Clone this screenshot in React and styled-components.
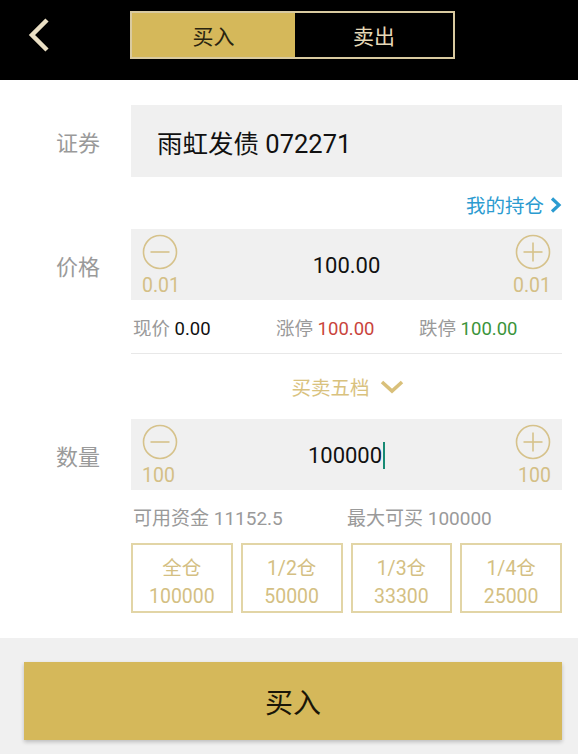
import React from 'react';
import styled, { createGlobalStyle } from 'styled-components';

const GOLD = '#d5b85a';
const TAN = '#d6c28b';

const GlobalStyle = createGlobalStyle`
  html, body {
    margin: 0;
    padding: 0;
    background: #fff;
  }
  body {
    font-family: Roboto, "Noto Sans CJK SC", sans-serif;
  }
  * {
    box-sizing: border-box;
  }
`;

const BackIcon = () => (
  <svg width="24" height="36" viewBox="0 0 24 36">
    <polyline points="20,3 5,18 20,33" fill="none" stroke="#eadfc4" strokeWidth="4.5" strokeLinejoin="miter" />
  </svg>
);

const StepIcon = ({ plus }) => (
  <svg width="36" height="36" viewBox="0 0 36 36">
    <circle cx="18" cy="18" r="16.5" fill="none" stroke={TAN} strokeWidth="1.6" />
    <line x1="8.5" y1="18" x2="27.5" y2="18" stroke={TAN} strokeWidth="1.6" />
    {plus && <line x1="18" y1="8.5" x2="18" y2="27.5" stroke={TAN} strokeWidth="1.6" />}
  </svg>
);

const RightChevron = () => (
  <svg width="13" height="16" viewBox="0 0 13 16">
    <polyline points="3,1.5 10,8 3,14.5" fill="none" stroke="#2b9bd0" strokeWidth="3.2" />
  </svg>
);

const DownChevron = () => (
  <svg width="24" height="14" viewBox="0 0 24 14">
    <polyline points="2,2 12,11 22,2" fill="none" stroke="#d9c07a" strokeWidth="3.6" />
  </svg>
);

const Stepper = ({ value, step, cursor }) => (
  <StepBox>
    <StepSide>
      <StepIcon />
      <StepLabel>{step}</StepLabel>
    </StepSide>
    <StepValue>
      {value}
      {cursor && <Cursor />}
    </StepValue>
    <StepSide right>
      <StepIcon plus />
      <StepLabel>{step}</StepLabel>
    </StepSide>
  </StepBox>
);

const positions = [
  { title: '全仓', qty: '100000' },
  { title: '1/2仓', qty: '50000' },
  { title: '1/3仓', qty: '33300' },
  { title: '1/4仓', qty: '25000' },
];

const App = () => (
  <Page>
    <GlobalStyle />
    <Header>
      <BackIcon />
      <Tabs>
        <Tab active>买入</Tab>
        <Tab>卖出</Tab>
      </Tabs>
    </Header>

    <Form>
      <Label>证券</Label>
      <SecurityBox>雨虹发债 072271</SecurityBox>

      <span />
      <LinkRow>
        我的持仓
        <RightChevron />
      </LinkRow>

      <Label>价格</Label>
      <Stepper value="100.00" step="0.01" />

      <span />
      <InfoRow>
        <span>现价 <Num>0.00</Num></span>
        <span>涨停 <Num color="#c9443c">100.00</Num></span>
        <span>跌停 <Num color="#3b943b">100.00</Num></span>
      </InfoRow>

      <span />
      <LevelsRow>
        买卖五档
        <DownChevron />
      </LevelsRow>

      <Label>数量</Label>
      <Stepper value="100000" step="100" cursor />

      <span />
      <FundsRow>
        <span>可用资金 11152.5</span>
        <span>最大可买 100000</span>
      </FundsRow>

      <span />
      <PositionGrid>
        {positions.map((p) => (
          <PositionButton key={p.title}>
            <span>{p.title}</span>
            <span>{p.qty}</span>
          </PositionButton>
        ))}
      </PositionGrid>
    </Form>

    <Footer>
      <BuyButton>买入</BuyButton>
    </Footer>
  </Page>
);

const Page = styled.div`
  width: 578px;
  height: 754px;
  display: flex;
  flex-direction: column;
  overflow: hidden;
  background: #fff;
`;

const Header = styled.div`
  height: 80px;
  flex-shrink: 0;
  background: #000;
  display: flex;
  align-items: center;
  padding: 0 0 10px 27px;
`;

const Tabs = styled.div`
  display: flex;
  width: 325px;
  height: 48px;
  margin-left: 79px;
  border: 2px solid #d9caa0;
`;

const Tab = styled.div`
  flex: ${(p) => (p.active ? '0 0 163px' : '1')};
  display: flex;
  align-items: center;
  justify-content: center;
  font-size: 21px;
  background: ${(p) => (p.active ? GOLD : '#000')};
  color: ${(p) => (p.active ? '#2a2410' : '#e6d9b8')};
`;

const Form = styled.div`
  display: grid;
  grid-template-columns: 75px 1fr;
  align-items: center;
  padding: 25px 16px 25px 56px;
`;

const Label = styled.div`
  font-size: 22px;
  color: #9a9a9a;
`;

const SecurityBox = styled.div`
  height: 72px;
  background: #f0f0f0;
  display: flex;
  align-items: center;
  padding-left: 26px;
  font-size: 25.5px;
  color: #111;
`;

const LinkRow = styled.div`
  height: 52px;
  display: flex;
  align-items: center;
  justify-content: flex-end;
  gap: 5px;
  font-size: 19.5px;
  color: #2b9bd0;
  padding-top: 3px;
`;

const StepBox = styled.div`
  height: 71px;
  background: #f0f0f0;
  display: flex;
  align-items: stretch;
  padding: 5px 11px 0 11px;
`;

const StepSide = styled.div`
  width: 40px;
  display: flex;
  flex-direction: column;
  align-items: ${(p) => (p.right ? 'flex-end' : 'flex-start')};
`;

const StepLabel = styled.div`
  font-size: 19.5px;
  line-height: 22px;
  margin-top: 5px;
  color: #d4bf86;
`;

const StepValue = styled.div`
  flex: 1;
  display: flex;
  align-items: center;
  justify-content: center;
  font-size: 22px;
  color: #111;
  padding-bottom: 3px;
`;

const Cursor = styled.span`
  display: inline-block;
  width: 2px;
  height: 27px;
  margin-left: 1px;
  background: #178a74;
`;

const InfoRow = styled.div`
  height: 54px;
  display: grid;
  grid-template-columns: 143px 143px 1fr;
  align-items: center;
  padding-left: 2px;
  font-size: 18.5px;
  color: #9a9a9a;
  border-bottom: 1px solid #e8e8e8;
`;

const Num = styled.span`
  color: ${(p) => p.color || '#111'};
`;

const LevelsRow = styled.div`
  height: 65px;
  display: flex;
  align-items: center;
  justify-content: center;
  gap: 10px;
  font-size: 19.5px;
  color: #d9c27e;
  padding-left: 2px;
`;

const FundsRow = styled.div`
  height: 53px;
  display: grid;
  grid-template-columns: 214px 1fr;
  align-items: center;
  padding-left: 2px;
  font-size: 19px;
  color: #9a9a9a;
`;

const PositionGrid = styled.div`
  display: grid;
  grid-template-columns: repeat(4, 1fr);
  gap: 8px;
`;

const PositionButton = styled.div`
  height: 70px;
  border: 2px solid #e2d5a6;
  display: flex;
  flex-direction: column;
  align-items: center;
  justify-content: center;
  gap: 6px;
  padding-top: 9px;
  font-size: 19.5px;
  line-height: 22px;
  color: #d4bf83;
`;

const Footer = styled.div`
  flex: 1;
  background: #f0f0f0;
  padding: 24px 16px 0 24px;
`;

const BuyButton = styled.div`
  height: 78px;
  background: ${GOLD};
  display: flex;
  align-items: center;
  justify-content: center;
  font-size: 28px;
  color: #1a1608;
  box-shadow: 0 2px 4px rgba(0, 0, 0, 0.22);
`;

export default App;
